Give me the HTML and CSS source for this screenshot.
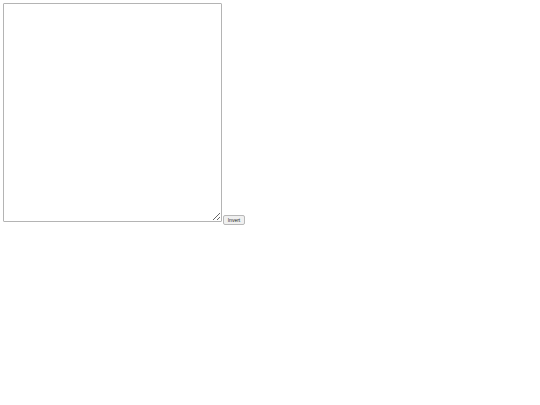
FILE: index.html
```html
<!DOCTYPE html>
<html>
<head>
<meta charset="utf-8">
<link rel="stylesheet" href="styles.css">
</head>
<body>
<div class="row"><textarea class="editor"></textarea><button class="invert">Invert</button></div>
</body>
</html>
```
FILE: styles.css
```css
html, body {
  margin: 0;
  padding: 0;
  background: #ffffff;
}
body {
  padding: 3px;
  font-family: "Liberation Sans", Arial, sans-serif;
}
.row {
  display: flex;
  align-items: flex-end;
  gap: 1px;
}
.editor {
  box-sizing: border-box;
  width: 219px;
  height: 219px;
  margin: 0;
  padding: 1px;
  border: 1px solid #b4b4b4;
  border-radius: 1px;
  resize: both;
  font-family: "Liberation Mono", monospace;
  font-size: 5px;
}
.invert {
  box-sizing: border-box;
  width: 22px;
  height: 10px;
  margin: 0 0 -3px 0;
  padding: 0 1px;
  border: 1px solid #b8b8b8;
  border-radius: 2px;
  background: #f0f0f0;
  color: #222;
  font-family: "Liberation Sans", Arial, sans-serif;
  font-size: 5px;
  line-height: 8px;
}
```
